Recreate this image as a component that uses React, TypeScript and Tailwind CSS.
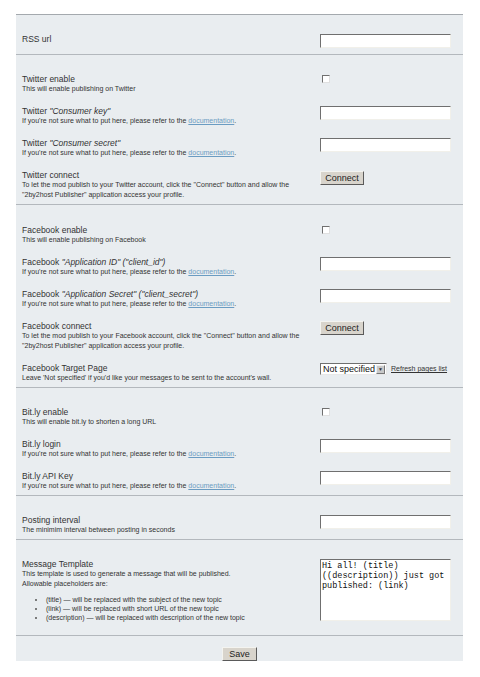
import type { ReactNode } from 'react';

const DocLink = () => (
  <>
    If you're not sure what to put here, please refer to the{' '}
    <a href="#" className="text-[#6b9cc2] underline">documentation</a>.
  </>
);

const TextInput = () => (
  <input
    type="text"
    className="block w-[131px] h-[14px] bg-white border border-t-[#6f6f6f] border-l-[#6f6f6f] border-b-[#f1f0ea] border-r-[#f1f0ea] outline-none"
  />
);

const Checkbox = () => (
  <span className="block mt-[1px] ml-[2px] w-[8px] h-[8px] bg-white border border-t-[#707070] border-l-[#707070] border-b-[#e0e0e0] border-r-[#e0e0e0]" />
);

const Button = ({ children, className = '' }: { children: ReactNode; className?: string }) => (
  <button
    type="button"
    className={`block h-[14px] bg-[#d8d4cc] text-[9px] leading-[10px] text-[#222] border border-t-[#f4f4f0] border-l-[#f4f4f0] border-b-[#5a5a5a] border-r-[#5a5a5a] ${className}`}
  >
    {children}
  </button>
);

const Row = ({ label, desc, control }: { label: ReactNode; desc?: ReactNode; control: ReactNode }) => (
  <div className="flex items-start">
    <div className="w-[298px] shrink-0 text-[#333]">
      <div className="text-[8.5px] leading-[10px]">{label}</div>
      {desc && <div className="w-[285px] text-[7px] leading-[10px]">{desc}</div>}
    </div>
    <div className="leading-none">{control}</div>
  </div>
);

const Section = ({ children, className = '' }: { children: ReactNode; className?: string }) => (
  <div className={`border-t border-[#b3b8bd] pl-[6px] pt-[19px] pb-[4px] flex flex-col gap-[12px] ${className}`}>
    {children}
  </div>
);

export default function App() {
  return (
    <div className="bg-white min-h-[677px] pt-[14px] pl-[16px]" style={{ fontFamily: '"Liberation Sans", Arial, sans-serif' }}>
      <div className="w-[447px] bg-[#e9edf0] border-t border-[#a4a9ae]">
        <div className="pl-[6px] pt-[19px] pb-[6px]">
          <Row label="RSS url" control={<TextInput />} />
        </div>

        <Section>
          <Row label="Twitter enable" desc="This will enable publishing on Twitter" control={<Checkbox />} />
          <Row label={<>Twitter <i>"Consumer key"</i></>} desc={<DocLink />} control={<TextInput />} />
          <Row label={<>Twitter <i>"Consumer secret"</i></>} desc={<DocLink />} control={<TextInput />} />
          <Row
            label="Twitter connect"
            desc={'To let the mod publish to your Twitter account, click the "Connect" button and allow the "2by2host Publisher" application access your profile.'}
            control={<Button className="w-[44px] mt-[1px]">Connect</Button>}
          />
        </Section>

        <Section className="pt-[20px]">
          <Row label="Facebook enable" desc="This will enable publishing on Facebook" control={<Checkbox />} />
          <Row label={<>Facebook <i>"Application ID" ("client_id")</i></>} desc={<DocLink />} control={<TextInput />} />
          <Row label={<>Facebook <i>"Application Secret" ("client_secret")</i></>} desc={<DocLink />} control={<TextInput />} />
          <Row
            label="Facebook connect"
            desc={'To let the mod publish to your Facebook account, click the "Connect" button and allow the "2by2host Publisher" application access your profile.'}
            control={<Button className="w-[44px]">Connect</Button>}
          />
          <Row
            label="Facebook Target Page"
            desc="Leave 'Not specified' if you'd like your messages to be sent to the account's wall."
            control={
              <div className="flex items-center gap-[4px]">
                <div className="flex items-center w-[67px] h-[12px] bg-white border border-t-[#6f6f6f] border-l-[#6f6f6f] border-b-[#e8e8e8] border-r-[#e8e8e8]">
                  <span className="flex-1 pl-[2px] text-[9px] leading-[10px] text-[#111] whitespace-nowrap overflow-hidden">Not specified</span>
                  <span className="w-[9px] h-[9px] mr-[1px] bg-[#c9c9c9] border border-t-[#eee] border-l-[#eee] border-b-[#777] border-r-[#777] flex items-center justify-center text-[5px] leading-none text-[#333]">▼</span>
                </div>
                <a href="#" className="text-[7px] leading-[10px] text-[#333] underline whitespace-nowrap">Refresh pages list</a>
              </div>
            }
          />
        </Section>

        <Section>
          <Row label="Bit.ly enable" desc="This will enable bit.ly to shorten a long URL" control={<Checkbox />} />
          <Row label="Bit.ly login" desc={<DocLink />} control={<TextInput />} />
          <Row label="Bit.ly API Key" desc={<DocLink />} control={<TextInput />} />
        </Section>

        <Section>
          <Row label="Posting interval" desc="The minimim interval between posting in seconds" control={<TextInput />} />
        </Section>

        <Section className="pb-[13px]">
          <Row
            label="Message Template"
            desc={
              <>
                This template is used to generate a message that will be published.
                <br />
                Allowable placeholders are:
                <ul className="mt-[6px] pl-[24px] list-disc marker:text-[#555] leading-[9px]">
                  <li>(title) — will be replaced with the subject of the new topic</li>
                  <li>(link) — will be replaced with short URL of the new topic</li>
                  <li>(description) — will be replaced with description of the new topic</li>
                </ul>
              </>
            }
            control={
              <textarea
                defaultValue="Hi all! (title) ((description)) just got published: (link)"
                className="block w-[131px] h-[62px] bg-white px-[1px] py-[1px] text-[8.5px] leading-[10px] text-[#111] resize-none overflow-hidden border border-t-[#6f6f6f] border-l-[#6f6f6f] border-b-[#f1f0ea] border-r-[#f1f0ea] outline-none"
                style={{ fontFamily: '"Liberation Mono", "Courier New", monospace' }}
              />
            }
          />
        </Section>

        <div className="border-t border-[#b3b8bd] pt-[11px] flex justify-center">
          <Button className="w-[35px]">Save</Button>
        </div>
      </div>
    </div>
  );
}
